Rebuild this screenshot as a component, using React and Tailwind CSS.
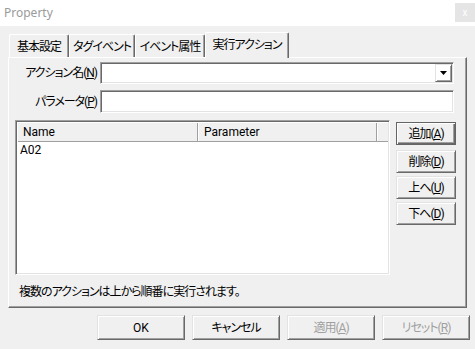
import React from "react";

const raised =
  "border border-t-[#e3e3e3] border-l-[#e3e3e3] border-r-[#696969] border-b-[#696969] shadow-[inset_1px_1px_#ffffff,inset_-1px_-1px_#a0a0a0]";
const sunken =
  "border border-t-[#a0a0a0] border-l-[#a0a0a0] border-r-white border-b-white shadow-[inset_1px_1px_#696969,inset_-1px_-1px_#e3e3e3]";

function Btn({ children, disabled, def, className = "" }) {
  return (
    <div
      className={
        "flex items-center justify-center bg-[#f0f0f0] leading-[16px] whitespace-nowrap " +
        (def
          ? "border border-[#646464] shadow-[inset_1px_1px_#ffffff,inset_-1px_-1px_#696969,inset_-2px_-2px_#a0a0a0] "
          : raised + " ") +
        (disabled ? "text-[#a0a0a0] " : "text-black ") +
        className
      }
    >
      {children}
    </div>
  );
}

function Tab({ children, w, selected }) {
  return (
    <div
      className={
        "relative flex items-center justify-center whitespace-nowrap tracking-[-1px] bg-[#f0f0f0] border-t border-l border-t-white border-l-white border-r border-r-[#696969] shadow-[inset_-1px_0_#a0a0a0] rounded-tl-[2px] rounded-tr-[2px] leading-[16px] " +
        (selected ? "h-[26px] mb-[-1px] z-10 pb-[2px]" : "h-[23px] pt-[1px]")
      }
      style={{ width: w }}
    >
      {children}
    </div>
  );
}

export default function App() {
  return (
    <div className="w-[475px] h-[349px] bg-[#f0f0f0] overflow-hidden text-[12px] text-black font-['Roboto','Noto_Sans_CJK_JP',sans-serif] [font-feature-settings:'palt']">
      {/* title bar */}
      <div className="h-[26px] bg-white flex items-start justify-between">
        <span className="pl-[4px] pt-[5px] text-[#9a9a9a] text-[12px] leading-[16px] font-['Noto_Sans',sans-serif]">
          Property
        </span>
        <div className="mt-[3px] w-[20px] h-[19px] bg-[#e5e5e5] flex items-center justify-center text-white text-[10px] leading-none">
          x
        </div>
      </div>

      <div className="pl-[8px] pt-[6px]">
        {/* tabs */}
        <div className="flex items-end h-[25px] pl-[1px]">
          <Tab w={60}>基本設定</Tab>
          <Tab w={66}>タグイベント</Tab>
          <Tab w={70}>イベント属性</Tab>
          <Tab w={84} selected>
            実行アクション
          </Tab>
        </div>

        {/* panel */}
        <div className="w-[459px] h-[251px] border border-t-white border-l-white border-r-[#696969] border-b-[#696969] shadow-[inset_-1px_-1px_#a0a0a0] pt-[4px]">
          {/* row 1 */}
          <div className="flex items-center h-[22px]">
            <div className="w-[88px] text-right leading-[16px] tracking-[-1px] whitespace-nowrap">
              アクション名(<u>N</u>)
            </div>
            <div className={"ml-[3px] w-[354px] h-[22px] bg-white flex justify-end items-center pr-[1px] " + sunken}>
              <div className={"w-[17px] h-[18px] flex items-center justify-center " + raised}>
                <svg width="7" height="4" viewBox="0 0 7 4">
                  <path d="M0 0h7L3.5 4z" fill="#000" />
                </svg>
              </div>
            </div>
          </div>
          {/* row 2 */}
          <div className="flex items-center h-[23px] mt-[6px]">
            <div className="w-[88px] text-right leading-[16px] tracking-[-1px] whitespace-nowrap">
              パラメータ(<u>P</u>)
            </div>
            <div className={"ml-[3px] w-[354px] h-[23px] bg-white " + sunken}></div>
          </div>

          {/* list + buttons */}
          <div className="flex mt-[7px] pl-[6px]">
            <div className={"w-[375px] h-[155px] bg-white p-[1px] flex flex-col " + sunken}>
              <div className="flex h-[19px] mt-[1px] ml-[1px] border-b border-b-[#a0a0a0]">
                <div className="w-[180px] pl-[5px] flex items-center bg-[#f0f0f0] border-r border-r-[#a0a0a0] leading-[16px]">
                  Name
                </div>
                <div className="w-[179px] pl-[5px] flex items-center bg-[#f0f0f0] border-l border-l-white border-r border-r-[#a0a0a0] leading-[16px]">
                  Parameter
                </div>
                <div className="flex-1 bg-[#f0f0f0] border-l border-l-white"></div>
              </div>
              <div className="pl-[3px] leading-[16px]">A02</div>
            </div>

            <div className="ml-[6px] flex flex-col pt-[2px] tracking-[-1px]">
              <Btn def className="w-[60px] h-[23px]">
                追加(<u>A</u>)
              </Btn>
              <Btn className="w-[60px] h-[23px] mt-[5px]">
                削除(<u>D</u>)
              </Btn>
              <Btn className="w-[60px] h-[23px] mt-[3px]">
                上へ(<u>U</u>)
              </Btn>
              <Btn className="w-[60px] h-[23px] mt-[3px]">
                下へ(<u>D</u>)
              </Btn>
            </div>
          </div>

          <div className="pl-[10px] mt-[9px] leading-[16px] tracking-[-1px] whitespace-nowrap">
            複数のアクションは上から順番に実行されます。
          </div>
        </div>
      </div>

      {/* bottom buttons */}
      <div className="flex pl-[97px] mt-[7px] gap-[7px] tracking-[-1px]">
        <Btn className="w-[88px] h-[25px] tracking-normal">OK</Btn>
        <Btn className="w-[88px] h-[25px]">キャンセル</Btn>
        <Btn disabled className="w-[88px] h-[25px]">
          適用(<u>A</u>)
        </Btn>
        <Btn disabled className="w-[88px] h-[25px]">
          リセット(<u>R</u>)
        </Btn>
      </div>
    </div>
  );
}
